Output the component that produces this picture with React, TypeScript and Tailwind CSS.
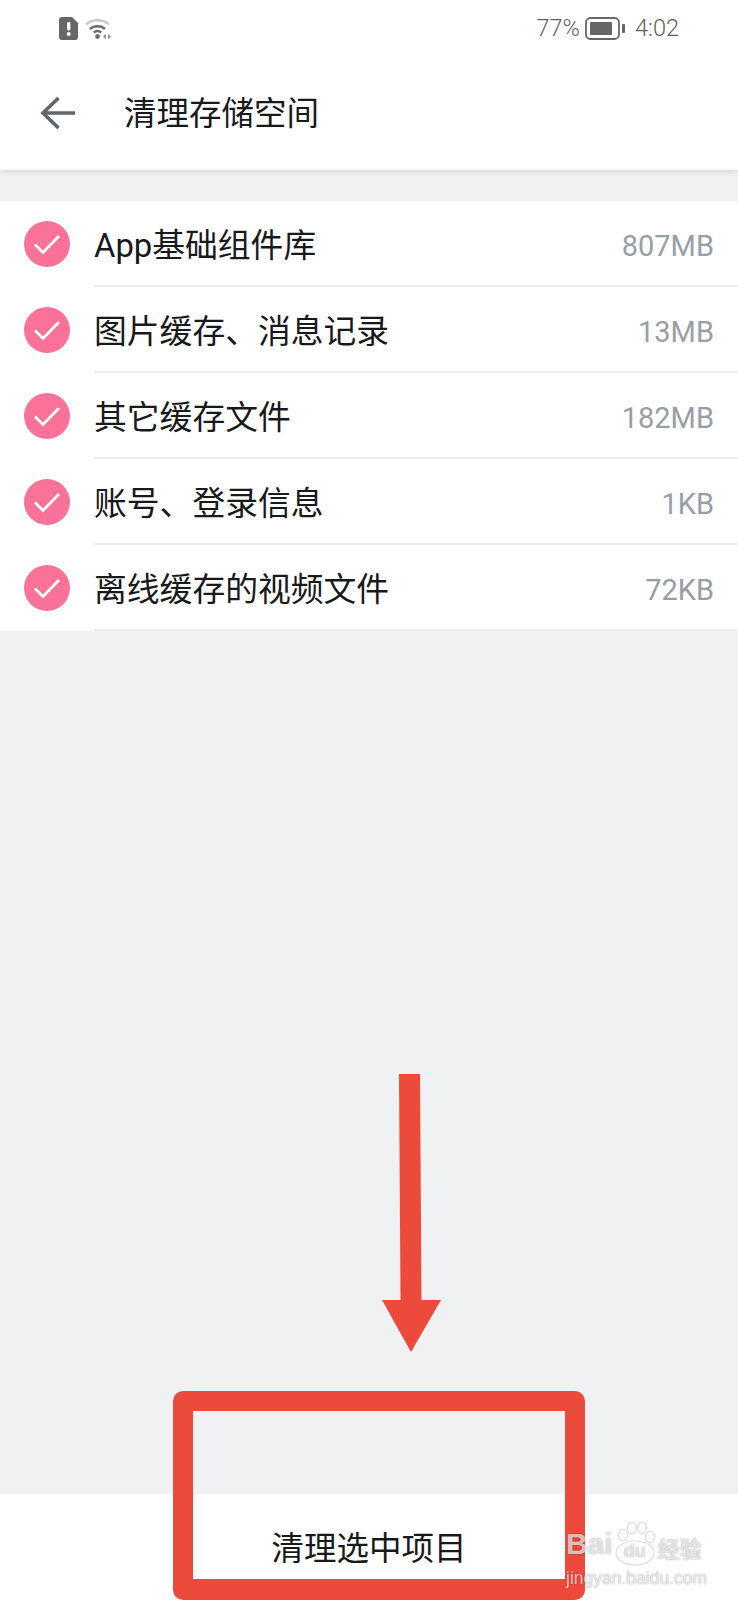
const items = [
  { name: "App基础组件库", size: "807MB" },
  { name: "图片缓存、消息记录", size: "13MB" },
  { name: "其它缓存文件", size: "182MB" },
  { name: "账号、登录信息", size: "1KB" },
  { name: "离线缓存的视频文件", size: "72KB" },
];

const cjk = "font-['Roboto','Noto_Sans_CJK_SC',sans-serif]";

function StatusBar() {
  return (
    <div className="flex h-[56px] items-center justify-between pl-[59px] pr-[59px] pt-[1px] text-[23.5px] text-[#5f5f5f]">
      <div className="flex items-center gap-[7px]">
        <svg width="19" height="23" viewBox="0 0 19 23">
          <path d="M3 0h10l6 6v14a3 3 0 0 1-3 3H3a3 3 0 0 1-3-3V3a3 3 0 0 1 3-3z" fill="#666" />
          <rect x="8" y="5" width="3.4" height="8.5" rx="1.4" fill="#fff" />
          <circle cx="9.7" cy="17" r="2" fill="#fff" />
        </svg>
        <svg width="27" height="23" viewBox="0 0 27 23" fill="none">
          <path d="M1 7.5C7 1.8 18 1.8 24 7.5" stroke="#c9c9c9" strokeWidth="2.4" />
          <path d="M5 12c4-3.6 11-3.6 15 0" stroke="#6d6d6d" strokeWidth="2.4" />
          <path d="M8.7 15.5c2.3-1.7 5.3-1.7 7.6 0" stroke="#6d6d6d" strokeWidth="2.4" />
          <circle cx="12.5" cy="19.5" r="2.4" fill="#6d6d6d" />
          <path d="M21 17v5l-3-2.5zM23 17l3 2.5-3 2.5z" fill="#8a8a8a" />
        </svg>
      </div>
      <div className="flex items-center font-['Roboto',sans-serif] font-light">
        <span>77%</span>
        <svg className="ml-[5px] mr-[10px]" width="40" height="23" viewBox="0 0 40 23" fill="none">
          <rect x="1" y="1" width="33" height="21" rx="4.5" stroke="#666" strokeWidth="1.8" />
          <rect x="5" y="5" width="22" height="13" rx="1" fill="#666" />
          <rect x="37" y="7" width="3" height="9" rx="1" fill="#666" />
        </svg>
        <span>4:02</span>
      </div>
    </div>
  );
}

function Row({ name, size }: { name: string; size: string }) {
  return (
    <div className="flex h-[86px] items-stretch bg-white">
      <div className="flex w-[94px] shrink-0 items-center pb-[1px] pl-[24px]">
        <div className="flex h-[46px] w-[46px] items-center justify-center rounded-full bg-[#fb7299]">
          <svg width="30" height="24" viewBox="0 0 30 24" fill="none">
            <path d="M3 12.5l8 8L27 4" stroke="#fff" strokeWidth="2.8" />
          </svg>
        </div>
      </div>
      <div className="flex flex-1 items-center justify-between border-b-2 border-[#eceef0] pr-[24px] pt-[8px]">
        <span className={`${cjk} text-[32.8px] text-[#18191c]`}>{name}</span>
        <span className="font-['Roboto',sans-serif] text-[29px] text-[#999ea6]">{size}</span>
      </div>
    </div>
  );
}

export default function App() {
  return (
    <div className="relative flex h-[1600px] w-[738px] flex-col overflow-hidden bg-[#f0f1f3]">
      <header className="z-10 h-[170px] bg-white shadow-[0_1px_6px_rgba(0,0,0,0.14)]">
        <StatusBar />
        <div className="flex h-[114px] items-center pl-[40px]">
          <svg width="35" height="34" viewBox="0 0 35 34" fill="none">
            <path d="M18.5 2L3 17l15.5 15M3 17h32" stroke="#61666d" strokeWidth="3.6" />
          </svg>
          <h1 className={`${cjk} ml-[49px] pt-[2px] text-[32.5px] font-normal text-[#18191c]`}>清理存储空间</h1>
        </div>
      </header>

      <section className="mt-[31px]">
        {items.map((item) => (
          <Row key={item.name} name={item.name} size={item.size} />
        ))}
      </section>

      <footer className="mt-auto flex h-[106px] items-start justify-center bg-white pt-[31px]">
        <button className={`${cjk} text-[32.5px] text-[#18191c]`}>清理选中项目</button>
      </footer>

      {/* annotation drawn on top of the screenshot */}
      <svg className="absolute left-[375px] top-[1070px]" width="75" height="285" viewBox="0 0 75 285">
        <path d="M24 4h21l1.5 226H66L36 282 7 230h18.5z" fill="#ec4a3b" />
      </svg>
      <div className="absolute left-[173px] top-[1391px] h-[209px] w-[412px] rounded-[10px] border-x-[20px] border-b-[21px] border-t-[20px] border-[#ec4a3b]" />

      {/* baidu watermark */}
      <div className="absolute left-[566px] top-[1522px] w-[140px] text-white/70 [text-shadow:0_0_1.5px_rgba(0,0,0,0.4)]">
        <div className="flex h-[44px] items-end">
          <span className="font-['Liberation_Sans',sans-serif] text-[30px] font-bold leading-[44px]">Bai</span>
          <div className="relative ml-[1px] flex h-[44px] w-[42px] items-end justify-center">
            <svg className="absolute left-0 top-0" width="42" height="44" viewBox="0 0 42 44" fill="none" stroke="#dcdcdc" strokeWidth="1.2">
              <ellipse cx="9" cy="13" rx="4.5" ry="6" />
              <ellipse cx="18" cy="6" rx="4.5" ry="5.5" />
              <ellipse cx="28" cy="6" rx="4.5" ry="5.5" />
              <ellipse cx="36" cy="15" rx="4.5" ry="6" />
              <ellipse cx="21" cy="31" rx="19" ry="12" />
            </svg>
            <span className="relative pb-[5px] font-['Liberation_Sans',sans-serif] text-[18px] font-bold leading-[20px]">du</span>
          </div>
          <span className="ml-[2px] font-['Noto_Sans_CJK_SC',sans-serif] text-[22px] font-bold leading-[38px]">经验</span>
        </div>
        <div className="mt-[1px] font-['Liberation_Sans',sans-serif] text-[17.5px] leading-[22px]">jingyan.baidu.com</div>
      </div>
    </div>
  );
}
